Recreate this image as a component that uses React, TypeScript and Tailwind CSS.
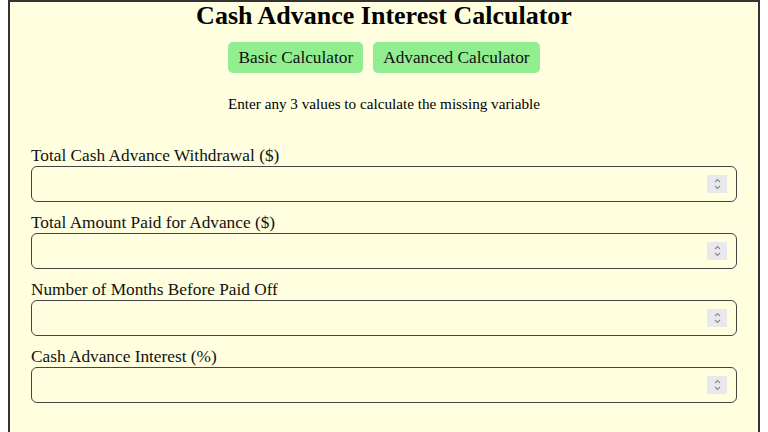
import { useState } from 'react'

const FIELDS = [
  'Total Cash Advance Withdrawal ($)',
  'Total Amount Paid for Advance ($)',
  'Number of Months Before Paid Off',
  'Cash Advance Interest (%)',
]

function Spinner() {
  return (
    <span className="flex h-[18px] w-[20px] flex-col items-center justify-center bg-[#e9e9ed]">
      <svg width="9" height="14" viewBox="0 0 9 14" fill="none" stroke="#8a8a8a" strokeWidth="1.1">
        <path d="M2 5 L4.5 2.5 L7 5" />
        <path d="M2 9 L4.5 11.5 L7 9" />
      </svg>
    </span>
  )
}

export default function App() {
  const [values, setValues] = useState<string[]>(['', '', '', ''])
  const [mode, setMode] = useState<'basic' | 'advanced'>('basic')

  return (
    <div className="min-h-screen bg-white font-['Liberation_Serif',serif] text-black">
      <div className="mx-[8px] min-h-[440px] border-2 border-[#333] bg-[#ffffe0] px-[21px]">
        <h1 className="m-0 text-center text-[26px] font-bold leading-[28px]">Cash Advance Interest Calculator</h1>

        <div className="mt-[12px] flex justify-center gap-[10px]">
          <button
            onClick={() => setMode('basic')}
            className="rounded-[5px] bg-[#90ee90] px-[10px] py-[6px] text-[17.3px] leading-[19px] text-[#111]"
          >
            Basic Calculator
          </button>
          <button
            onClick={() => setMode('advanced')}
            className="rounded-[5px] bg-[#90ee90] px-[10px] py-[6px] text-[17.3px] leading-[19px] text-[#111]"
          >
            Advanced Calculator
          </button>
        </div>

        <p className="mt-[22px] text-center text-[15.2px] leading-[17px]">
          Enter any 3 values to calculate the missing variable
        </p>

        <div className="mt-[34px] flex flex-col gap-[11px]" data-mode={mode}>
          {FIELDS.map((label, i) => (
            <div key={label} className="flex flex-col">
              <label className="text-[17.3px] leading-[20px] text-[#111]">{label}</label>
              <div className="flex h-[36px] items-center rounded-[6px] border border-[#444] pr-[9px]">
                <input
                  type="text"
                  value={values[i]}
                  onChange={(e) => setValues((v) => v.map((x, j) => (j === i ? e.target.value : x)))}
                  className="h-full min-w-0 flex-1 bg-transparent px-2 text-[16px] outline-none"
                />
                <Spinner />
              </div>
            </div>
          ))}
        </div>
      </div>
    </div>
  )
}
